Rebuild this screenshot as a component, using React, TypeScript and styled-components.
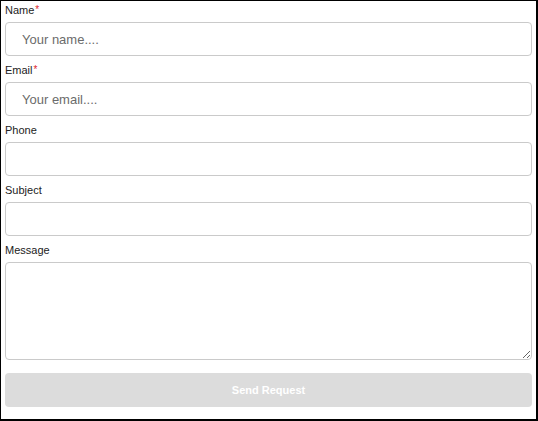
import React from "react";
import styled, { createGlobalStyle } from "styled-components";

const Global = createGlobalStyle`
  html, body { margin: 0; padding: 0; background: #fff; }
  * { box-sizing: border-box; }
`;

const Frame = styled.form`
  width: 538px;
  height: 421px;
  border-style: solid;
  border-color: #000;
  border-width: 1px 2px 2px 1px;
  padding: 1px 4px 0 4px;
  font-family: "Liberation Sans", Arial, sans-serif;
  display: flex;
  flex-direction: column;
  background: #fff;
`;

const Field = styled.div`
  display: flex;
  flex-direction: column;
  gap: 4px;
  margin-bottom: 6px;
`;

const Label = styled.label`
  font-size: 11px;
  line-height: 16px;
  color: #222;
  height: 16px;
`;

const Star = styled.span`
  color: #e0242b;
  font-size: 10px;
  margin-left: 1px;
  vertical-align: top;
  position: relative;
  top: 0px;
`;

const Input = styled.input`
  width: 100%;
  height: 34px;
  border: 1px solid #cacaca;
  border-radius: 4px;
  padding: 0 16px;
  font-family: "Liberation Sans", Arial, sans-serif;
  font-size: 13px;
  color: #333;
  outline: none;
  &::placeholder { color: #6b6b6b; }
`;

const TextArea = styled.textarea`
  width: 100%;
  height: 98px;
  border: 1px solid #cacaca;
  border-radius: 4px;
  padding: 8px 16px;
  font-family: "Liberation Sans", Arial, sans-serif;
  font-size: 13px;
  outline: none;
  display: block;
`;

const Button = styled.button`
  margin-top: 7px;
  width: 100%;
  height: 34px;
  border: none;
  border-radius: 4px;
  background: #dcdcdc;
  color: #fff;
  font-family: "Liberation Sans", Arial, sans-serif;
  font-size: 11px;
  font-weight: 700;
  cursor: not-allowed;
`;

type FieldDef = { label: string; required?: boolean; placeholder?: string; multi?: boolean };

const fields: FieldDef[] = [
  { label: "Name", required: true, placeholder: "Your name...." },
  { label: "Email", required: true, placeholder: "Your email...." },
  { label: "Phone" },
  { label: "Subject" },
  { label: "Message", multi: true },
];

export default function App() {
  return (
    <>
      <Global />
      <Frame onSubmit={(e) => e.preventDefault()}>
        {fields.map((f) => (
          <Field key={f.label}>
            <Label>
              {f.label}
              {f.required && <Star>*</Star>}
            </Label>
            {f.multi ? <TextArea /> : <Input placeholder={f.placeholder} />}
          </Field>
        ))}
        <Button type="submit" disabled>
          Send Request
        </Button>
      </Frame>
    </>
  );
}
